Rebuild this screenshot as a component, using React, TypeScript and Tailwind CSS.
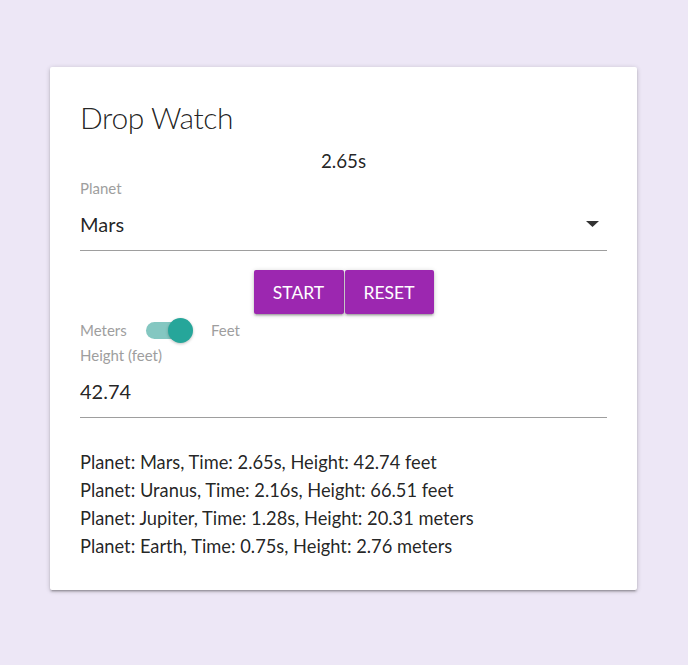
import { useState } from "react";

const results = [
  "Planet: Mars, Time: 2.65s, Height: 42.74 feet",
  "Planet: Uranus, Time: 2.16s, Height: 66.51 feet",
  "Planet: Jupiter, Time: 1.28s, Height: 20.31 meters",
  "Planet: Earth, Time: 0.75s, Height: 2.76 meters",
];

export default function App() {
  const [feet, setFeet] = useState(true);

  return (
    <div className="min-h-[665px] bg-[#ede7f6] px-[50px] pt-[67px] font-['Lato',sans-serif] text-[rgba(0,0,0,0.87)]">
      <div className="w-[587px] rounded-[2px] bg-white px-[30px] pt-[30px] pb-[30px] shadow-[0_2px_2px_0_rgba(0,0,0,0.14),0_3px_1px_-2px_rgba(0,0,0,0.12),0_1px_5px_0_rgba(0,0,0,0.2)]">
        <h1 className="h-[40px] text-[30px] font-light leading-[40px] tracking-[-0.4px]">Drop Watch</h1>

        <div className="mt-[10px] h-[28px] text-center text-[18.75px] leading-[28px]">2.65s</div>

        <div className="mt-[3px]">
          <div className="h-[20px] text-[15px] leading-[20px] text-[#9e9e9e]">Planet</div>
          <div className="flex h-[53px] items-center justify-between border-b border-[#9e9e9e] pr-[8px]">
            <span className="text-[20px]">Mars</span>
            <svg width="13" height="6" viewBox="0 0 13 6">
              <path d="M0 0h13L6.5 6z" fill="#333" />
            </svg>
          </div>
        </div>

        <div className="mt-[19px] flex justify-center gap-[1px]">
          <button className="h-[44px] w-[90px] rounded-[2px] bg-[#9c27b0] pt-[3px] text-[17.5px] uppercase text-white shadow-[0_2px_2px_0_rgba(0,0,0,0.14),0_3px_1px_-2px_rgba(0,0,0,0.12),0_1px_5px_0_rgba(0,0,0,0.2)]">
            Start
          </button>
          <button className="h-[44px] w-[89px] rounded-[2px] bg-[#9c27b0] pt-[3px] text-[17.5px] uppercase text-white shadow-[0_2px_2px_0_rgba(0,0,0,0.14),0_3px_1px_-2px_rgba(0,0,0,0.12),0_1px_5px_0_rgba(0,0,0,0.2)]">
            Reset
          </button>
        </div>

        <div className="mt-[2px] flex h-[28px] items-center text-[15px] text-[#9e9e9e]">
          <span className="w-[45px]">Meters</span>
          <button
            onClick={() => setFeet(!feet)}
            className="relative mr-[20px] ml-[21px] h-[17px] w-[45px] rounded-full bg-[#84c7c1]"
          >
            <span
              className={
                feet
                  ? "absolute top-[-4px] left-[22px] h-[25px] w-[25px] rounded-full bg-[#26a69a] shadow-[0_1px_3px_rgba(0,0,0,0.25)]"
                  : "absolute top-[-4px] left-[-2px] h-[25px] w-[25px] rounded-full bg-[#f1f1f1] shadow-[0_1px_3px_rgba(0,0,0,0.25)]"
              }
            />
          </button>
          <span>Feet</span>
        </div>

        <div className="mt-[1px]">
          <div className="h-[20px] text-[15px] leading-[20px] text-[#9e9e9e]">Height (feet)</div>
          <div className="flex h-[53px] items-center border-b border-[#9e9e9e]">
            <span className="text-[20px]">42.74</span>
          </div>
        </div>

        <div className="mt-[30px]">
          {results.map((r) => (
            <div key={r} className="h-[28px] text-[18.3px] leading-[28px]">
              {r}
            </div>
          ))}
        </div>
      </div>
    </div>
  );
}
